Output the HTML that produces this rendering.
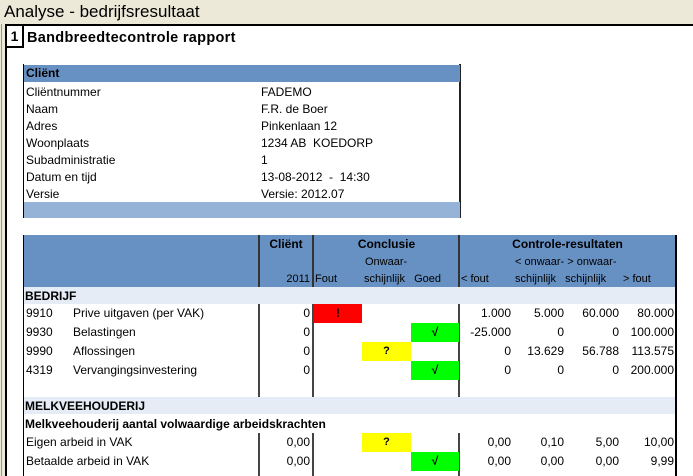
<!DOCTYPE html>
<html><head><meta charset="utf-8"><style>
*{margin:0;padding:0;box-sizing:border-box}
body{width:693px;height:476px;overflow:hidden;background:#fff;font-family:"Liberation Sans",sans-serif;font-size:12px;color:#000;position:relative}
.a{position:absolute;white-space:nowrap}
.r{text-align:right}
.c{text-align:center}
.b{font-weight:bold}
</style></head><body>
<div class="a" style="left:0;top:0;width:693px;height:24px;background:#ECE9D8"></div>
<div class="a" style="left:0;top:0;width:5px;height:476px;background:#ECE9D8"></div>
<div class="a" style="left:1px;top:24px;width:1px;height:452px;background:#7F9DB9"></div>
<div class="a" style="left:5px;top:24px;width:688px;height:2px;background:#000"></div>
<div class="a" style="left:5px;top:24px;width:2px;height:452px;background:#000"></div>
<div class="a" style="left:4px;top:1px;font-size:17px;line-height:22px">Analyse - bedrijfsresultaat</div>
<div class="a b c" style="left:5px;top:26px;width:19px;height:22px;border:2px solid #000;border-top:none;border-left:none;font-size:14px;line-height:20px;padding-left:2px">1</div>
<div class="a b" style="left:27px;top:30px;font-size:14.5px;letter-spacing:0.3px">Bandbreedtecontrole rapport</div>

<!-- client box -->
<div class="a" style="left:23px;top:64px;width:1px;height:154px;background:#000"></div>
<div class="a" style="left:459px;top:64px;width:2px;height:154px;background:#222"></div>
<div class="a b" style="left:24px;top:65px;width:436px;height:17px;background:#6891C3;padding-left:2px;line-height:17px">Cliënt</div>
<div class="a" style="left:24px;top:202px;width:436px;height:16px;background:#95B3D7"></div>
<div class="a" style="left:26px;top:84px;line-height:17px">Cliëntnummer<br>Naam<br>Adres<br>Woonplaats<br>Subadministratie<br>Datum en tijd<br>Versie</div>
<div class="a" style="left:261px;top:84px;line-height:17px">FADEMO<br>F.R. de Boer<br>Pinkenlaan 12<br>1234 AB&nbsp; KOEDORP<br>1<br>13-08-2012&nbsp; -&nbsp; 14:30<br>Versie: 2012.07</div>

<!-- main table -->
<div class="a" style="left:23px;top:235px;width:1px;height:241px;background:#000"></div>
<div class="a" style="left:24px;top:235px;width:652px;height:52px;background:#6891C3"></div>
<div class="a" style="left:675px;top:235px;width:2px;height:241px;background:#000"></div>
<div class="a" style="left:24px;top:287px;width:651px;height:17px;background:#E6ECF5"></div>
<div class="a" style="left:24px;top:397px;width:651px;height:17px;background:#E6ECF5"></div>
<div class="a" style="left:258px;top:235px;width:2px;height:52px;background:#333"></div>
<div class="a" style="left:312px;top:235px;width:2px;height:52px;background:#333"></div>
<div class="a" style="left:458px;top:235px;width:2px;height:52px;background:#333"></div>
<div class="a" style="left:258px;top:304px;width:2px;height:93px;background:#444"></div>
<div class="a" style="left:312px;top:304px;width:2px;height:93px;background:#444"></div>
<div class="a" style="left:458px;top:304px;width:2px;height:93px;background:#444"></div>
<div class="a" style="left:258px;top:433px;width:2px;height:43px;background:#444"></div>
<div class="a" style="left:312px;top:433px;width:2px;height:43px;background:#444"></div>
<div class="a" style="left:458px;top:433px;width:2px;height:43px;background:#444"></div>
<div class="a b c" style="left:260px;top:237px;width:52px">Cliënt</div>
<div class="a b c" style="left:314px;top:237px;width:145px">Conclusie</div>
<div class="a b c" style="left:460px;top:237px;width:215px">Controle-resultaten</div>
<div class="a" style="left:365px;top:256px;font-size:11px">Onwaar-</div>
<div class="a" style="left:515px;top:256px;font-size:11px">&lt; onwaar- &gt; onwaar-</div>
<div class="a r" style="left:260px;top:273px;width:50px;font-size:11px">2011</div>
<div class="a" style="left:315px;top:273px;font-size:11px">Fout</div>
<div class="a" style="left:364px;top:273px;font-size:11px">schijnlijk&nbsp;&nbsp; Goed</div>
<div class="a" style="left:461px;top:273px;font-size:11px">&lt; fout</div>
<div class="a" style="left:515px;top:273px;font-size:11px">schijnlijk&nbsp;&nbsp; schijnlijk</div>
<div class="a" style="left:623px;top:273px;font-size:11px">&gt; fout</div>
<div class="a b" style="left:25px;top:289px">BEDRIJF</div>
<div class="a b" style="left:25px;top:399px">MELKVEEHOUDERIJ</div>
<div class="a b" style="left:25px;top:417px">Melkveehouderij aantal volwaardige arbeidskrachten</div>
<div class="a b c" style="left:314px;top:304px;width:48px;height:19px;background:#FF0000;line-height:19px">!</div>
<div class="a b c" style="left:411px;top:323px;width:48px;height:19px;background:#00FF00;line-height:19px">√</div>
<div class="a b c" style="left:362px;top:342px;width:49px;height:19px;background:#FFFF00;line-height:19px;font-size:11px">?</div>
<div class="a b c" style="left:411px;top:361px;width:48px;height:19px;background:#00FF00;line-height:19px">√</div>
<div class="a b c" style="left:362px;top:433px;width:49px;height:19px;background:#FFFF00;line-height:19px;font-size:11px">?</div>
<div class="a b c" style="left:411px;top:452px;width:48px;height:19px;background:#00FF00;line-height:19px">√</div>
<div class="a" style="left:26px;top:304px;line-height:19px">9910<br>9930<br>9990<br>4319</div>
<div class="a" style="left:73px;top:304px;line-height:19px">Prive uitgaven (per VAK)<br>Belastingen<br>Aflossingen<br>Vervangingsinvestering</div>
<div class="a r" style="left:260px;top:304px;width:50px;line-height:19px">0<br>0<br>0<br>0</div>
<div class="a r" style="left:460px;top:304px;width:51px;line-height:19px">1.000<br>-25.000<br>0<br>0</div>
<div class="a r" style="left:511px;top:304px;width:53px;line-height:19px">5.000<br>0<br>13.629<br>0</div>
<div class="a r" style="left:564px;top:304px;width:55px;line-height:19px">60.000<br>0<br>56.788<br>0</div>
<div class="a r" style="left:619px;top:304px;width:55px;line-height:19px">80.000<br>100.000<br>113.575<br>200.000</div>
<div class="a" style="left:26px;top:433px;line-height:19px">Eigen arbeid in VAK<br>Betaalde arbeid in VAK</div>
<div class="a r" style="left:260px;top:433px;width:50px;line-height:19px">0,00<br>0,00</div>
<div class="a r" style="left:460px;top:433px;width:51px;line-height:19px">0,00<br>0,00</div>
<div class="a r" style="left:511px;top:433px;width:53px;line-height:19px">0,10<br>0,00</div>
<div class="a r" style="left:564px;top:433px;width:55px;line-height:19px">5,00<br>0,00</div>
<div class="a r" style="left:619px;top:433px;width:55px;line-height:19px">10,00<br>9,99</div>
</body></html>
